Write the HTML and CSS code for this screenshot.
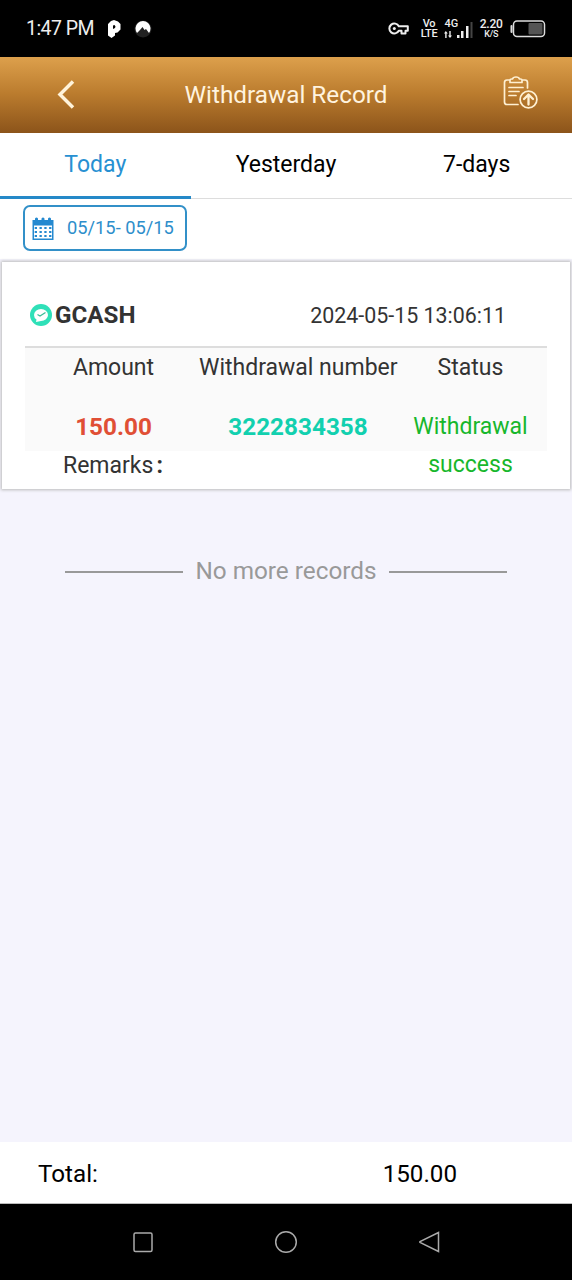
FILE: index.html
```html
<!DOCTYPE html>
<html lang="en">
<head>
<meta charset="utf-8">
<title>Withdrawal Record</title>
<link rel="stylesheet" href="styles.css">
</head>
<body>
<div class="statusbar">
  <span class="clock">1:47 PM</span>
  <svg class="app-p" width="14" height="18" viewBox="0 0 14 18"><path fill="#fff" fill-rule="evenodd" d="M4 1L7 0L11 1.500L13.500 4V9.500L10.500 12.500L8 13V15.500L4.500 18L1 15.500V4ZM6 5.500V9L8 8L8.500 6.500L7.500 5Z"/></svg>
  <svg class="app-n" width="18" height="18" viewBox="0 0 18 18"><circle cx="9" cy="9" r="8.500" fill="#222"/><path fill="#fff" d="M3 13A7.500 7.500 0 1 1 15 13L12 9L10.500 10L8.500 7L6 10Z"/></svg>
  <svg class="key" width="21" height="13" viewBox="0 0 21 13" fill="none" stroke="#eee" stroke-width="2" stroke-linejoin="round"><path d="M10.800 4.200A5 5 0 1 0 10.800 8.800H13.500V11.500H17.500V8.800H19.800V4.200Z"/><circle cx="6.300" cy="6.500" r="1.500" fill="#eee" stroke="none"/></svg>
  <span class="volte"><b>Vo</b><b>LTE</b></span>
  <span class="network"><b>4G</b><svg width="29" height="20" viewBox="0 0 29 20" fill="#eee"><path d="M1.800 12L3.800 14.500H2.600V19H1.200V14.500H0ZM6 19L4 16.500H5.300V12H6.700V16.500H8Z"/><rect x="13" y="16" width="2.500" height="3"/><rect x="17" y="12" width="2.500" height="7"/><rect x="22" y="7" width="2.500" height="12"/><rect x="26.500" y="3" width="2" height="16" fill="#444"/></svg></span>
  <span class="speed"><b>2.20</b><small>K/S</small></span>
  <svg class="battery" width="36" height="18" viewBox="0 0 36 18"><rect x="3.500" y="1" width="31" height="15.500" rx="3.500" fill="none" stroke="#ddd" stroke-width="1.500"/><rect x="0.500" y="5" width="2" height="8" rx="1" fill="#ddd"/><rect x="18.500" y="3" width="14" height="11.500" rx="1" fill="#555"/></svg>
</div>

<header class="header">
  <svg class="back" width="18" height="29" viewBox="0 0 18 29" fill="none" stroke="#fff3da" stroke-width="3.500"><path d="M16 1.500L3 14.500L16 27.500"/></svg>
  <h1>Withdrawal Record</h1>
  <svg class="report" width="36" height="34" viewBox="0 0 36 34" fill="none" stroke="#fff0d2" stroke-width="1.700" stroke-linecap="round" stroke-linejoin="round"><path d="M7 4H4Q1.500 4 1.500 6.500V26Q1.500 28.500 4 28.500H15M19 4H22Q24.500 4 24.500 6.500V12M7 6.500V4Q7 3 8.500 3H9.500Q10 1 13 1T16.500 3H17.500Q19 3 19 4V6.500ZM6 11.500H20M6 15.500H16M6 19.500H13"/><circle cx="25.500" cy="23.500" r="8.400"/><path stroke-width="2.300" d="M25.500 28.500V19M21 23L25.500 18.500L30 23"/></svg>
</header>

<nav class="tabs">
  <a class="tab active">Today</a>
  <a class="tab">Yesterday</a>
  <a class="tab">7-days</a>
</nav>

<div class="filter">
  <div class="range">
    <svg width="22" height="23" viewBox="0 0 22 23"><path fill="#2589d0" d="M0.500 3H3V1.500Q4.500 -0.500 6 1.500V3H9.500V1.500Q11 -0.500 12.500 1.500V3H16V1.500Q17.500 -0.500 19 1.500V3H21.500V23H0.500Z"/><path fill="#fff" d="M2 8.500H20V21.500H2Z"/><path stroke="#2589d0" stroke-width="2.200" stroke-dasharray="2.300 2.500" d="M2.700 11H19.500M2.700 15H19.500M2.700 19H19.500"/></svg>
    <span>05/15- 05/15</span>
  </div>
</div>

<main class="content">
  <article class="card">
    <div class="card-head">
      <svg width="24" height="24" viewBox="0 0 24 24"><circle cx="12" cy="12" r="11" fill="#2fe0b8"/><path fill="#fff" d="M5 12A7 6 0 1 1 12 18L7 19L7.500 16.500Q5 15 5 12Z"/><path d="M8.500 11.500L11 13L16.500 9.500" fill="none" stroke="#3bbd98" stroke-width="1.300"/></svg>
      <strong>GCASH</strong>
      <time>2024-05-15 13:06:11</time>
    </div>
    <div class="details">
      <div class="col amount"><span>Amount</span><b>150.00</b></div>
      <div class="col number"><span>Withdrawal number</span><b>3222834358</b></div>
      <div class="col status"><span>Status</span><p>Withdrawal success</p></div>
    </div>
    <div class="remarks">Remarks<span>:</span></div>
  </article>
  <div class="end"><i></i><span>No more records</span><i></i></div>
</main>

<footer class="total"><span>Total:</span><span class="sum">150.00</span></footer>

<div class="navbar">
  <svg width="24" height="24" viewBox="0 0 24 24"><rect x="3" y="3" width="18" height="18.500" rx="1.500"/></svg>
  <svg width="24" height="24" viewBox="0 0 24 24"><circle cx="12" cy="12" r="10.300"/></svg>
  <svg width="24" height="24" viewBox="0 0 24 24"><path d="M21.500 2.500V21.500L3 12.500Q2.500 12 3 11.500Z"/></svg>
</div>
</body>
</html>
```
FILE: styles.css
```css
* { box-sizing: border-box; }
body {
  margin: 0;
  width: 572px;
  height: 1280px;
  display: flex;
  flex-direction: column;
  overflow: hidden;
  background: #f5f4fd;
  color: #000;
  font-family: Roboto, "Liberation Sans", sans-serif;
  font-size: 23px;
  line-height: 28px;
}
svg { display: block; flex: none; }

.statusbar {
  height: 57px;
  flex: none;
  display: flex;
  align-items: center;
  padding: 0 26px;
  background: #000;
  color: #eee;
}
.clock { width: 82px; padding-top: 1px; font-size: 19.500px; letter-spacing: -0.550px; white-space: nowrap; }
.app-n { margin-left: 13px; }
.key { margin-left: 236px; }
.volte, .speed { display: flex; flex-direction: column; align-items: center; font-size: 10.500px; line-height: 10px; }
.volte { width: 17px; margin-left: 12px; font-size: 11px; line-height: 9px; gap: 1px; letter-spacing: -0.300px; }
.volte b, .speed b, .speed small { display: block; font-weight: 500; }
.network { position: relative; width: 29px; height: 20px; margin-left: 7px; }
.network b { position: absolute; top: 0; left: 0; font-size: 11px; line-height: 10px; font-weight: 500; }
.speed { width: 24px; margin-left: 6px; font-size: 12px; line-height: 11px; letter-spacing: -0.200px; }
.speed small { font-size: 9px; line-height: 9px; }
.battery { margin-left: 7px; }

.header {
  height: 76px;
  flex: none;
  display: grid;
  grid-template-columns: 126px 1fr 126px;
  align-items: center;
  background: linear-gradient(#dda04c, #bb7c2e 48%, #8c541a);
}
.back { margin: -2px 0 0 57px; }
.header h1 { margin: 0; text-align: center; font-weight: 400; font-size: 24.300px; color: #fff3df; }
.report { margin: -5px 0 0 57px; }

.tabs {
  height: 66px;
  flex: none;
  display: grid;
  grid-template-columns: repeat(3, 1fr);
  background: #fff;
  box-shadow: inset 0 -1px #ddd;
}
.tab { text-align: center; padding-top: 18px; }
.tab.active { color: #2790d2; border-bottom: 3px solid #2589c8; }

.filter { height: 60px; flex: none; padding: 6px 23px; background: #fff; }
.range {
  width: 164px;
  height: 46px;
  display: flex;
  align-items: center;
  gap: 13px;
  padding-left: 7px;
  border: 2px solid #3290c8;
  border-radius: 7px;
  color: #2d8ecb;
  font-size: 18.300px;
  white-space: nowrap;
}

.content { flex: 1; padding: 3px 2px 0; }
.card {
  height: 227px;
  padding: 32px 23px 0;
  background: #fff;
  color: #333;
  box-shadow: 0 0 3px 1px #bbb;
}
.card-head {
  height: 54px;
  display: flex;
  align-items: flex-start;
  padding: 7px 41px 0 4px;
  border-bottom: 2px solid #ddd;
}
.card-head svg { margin-top: 2px; }
.card-head strong { font-size: 24.200px; font-weight: 700; margin-left: 2px; }
.card-head time { margin-left: auto; padding-top: 1px; font-size: 21.400px; }
.details {
  height: 103px;
  display: grid;
  grid-template-columns: 174px 198px 151px;
  background: #fafafa;
  text-align: center;
}
.col { display: flex; flex-direction: column; gap: 31px; padding-top: 6px; white-space: nowrap; }
.col span { height: 28px; }
.col b { font-weight: 700; font-size: 24.300px; }
.amount { padding-left: 3px; }
.amount b { color: #e04f35; }
.number b { color: #12d0af; }
.status { padding-right: 4px; }
.status p { margin: -5px 0 0; white-space: normal; line-height: 38px; color: #17b72c; }
.remarks { padding: 1px 0 0 38px; }
.remarks span { margin-left: 3px; font-weight: 700; }

.end {
  display: flex;
  align-items: center;
  justify-content: center;
  gap: 12px;
  margin-top: 68px;
  color: #999;
  font-size: 24.300px;
}
.end i { width: 118px; height: 2px; margin-top: 2px; background: #999; }

.total {
  height: 62px;
  flex: none;
  display: flex;
  align-items: center;
  padding: 2px 115px 0 38px;
  background: #fff;
  border-bottom: 1px solid #bbb;
  font-size: 24.200px;
}
.sum { margin-left: auto; }

.navbar { height: 76px; flex: none; display: flex; justify-content: center; gap: 119px; align-items: center; background: #000; }
.navbar svg { fill: none; stroke: #aaa; stroke-width: 1.500; }
```
